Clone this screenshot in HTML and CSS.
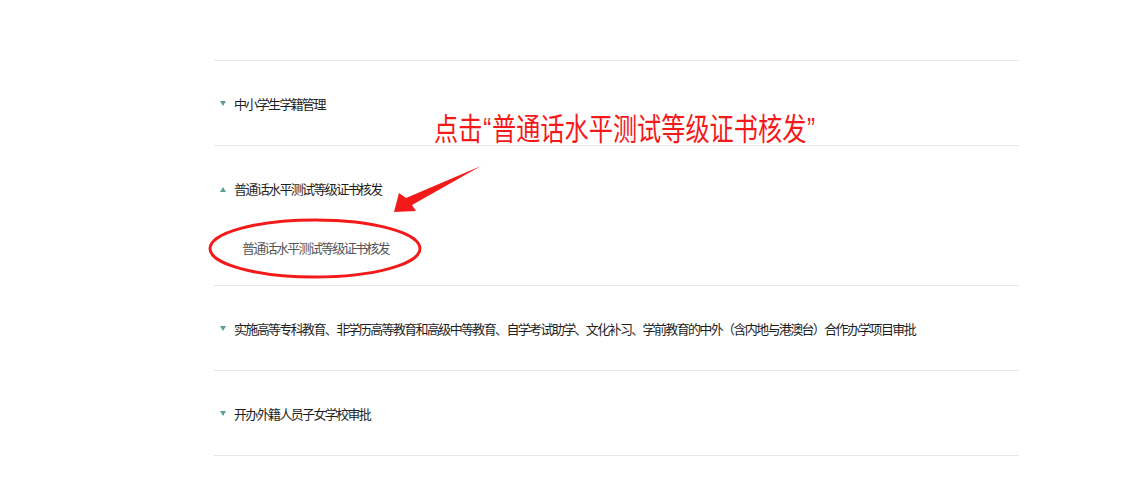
FILE: index.html
```html
<!DOCTYPE html>
<html lang="zh-CN">
<head>
<meta charset="utf-8">
<title>事项列表</title>
<link rel="stylesheet" href="styles.css">
</head>
<body>
<div class="page">
  <ul class="list">
    <li class="item">
      <div class="head"><span class="tri down"></span><span class="label">中小学生学籍管理</span></div>
    </li>
    <li class="item open">
      <div class="head"><span class="tri up"></span><span class="label">普通话水平测试等级证书核发</span></div>
      <ul class="sub">
        <li class="sub-item">普通话水平测试等级证书核发</li>
      </ul>
    </li>
    <li class="item">
      <div class="head"><span class="tri down"></span><span class="label">实施高等专科教育、非学历高等教育和高级中等教育、自学考试助学、文化补习、学前教育的中外（含内地与港澳台）合作办学项目审批</span></div>
    </li>
    <li class="item">
      <div class="head"><span class="tri down"></span><span class="label">开办外籍人员子女学校审批</span></div>
    </li>
  </ul>

  <div class="note">点击<span class="q">“</span>普通话水平测试等级证书核发<span class="q">”</span></div>
  <svg class="marks" width="1141" height="497" viewBox="0 0 1141 497">
    <ellipse cx="315" cy="248.5" rx="105" ry="28.5" fill="none" stroke="#f41a1a" stroke-width="3"/>
    <polygon points="394,212 399,193 406,198 481,166 412,205 416,211" fill="#f41a1a"/>
  </svg>
</div>
</body>
</html>
```
FILE: styles.css
```css
* { box-sizing: border-box; }
html, body { margin: 0; padding: 0; background: #fff; }
body {
  font-family: "Noto Sans CJK SC", "Noto Sans", sans-serif;
  color: #222;
}
.page {
  position: relative;
  width: 1141px;
  height: 497px;
  padding-top: 60px;
}
.list {
  list-style: none;
  margin: 0 0 0 214px;
  padding: 0;
  width: 805px;
  border-top: 1px solid #e6e6e6;
}
.item {
  border-bottom: 1px solid #e6e6e6;
}
.head {
  height: 84px;
  display: flex;
  align-items: center;
  padding-left: 6px;
  padding-top: 1px;
}
.item.open .head { height: 86px; padding-top: 0; }
.tri {
  width: 0;
  height: 0;
  border-left: 3.5px solid transparent;
  border-right: 3.5px solid transparent;
  margin-right: 8px;
}
.tri.down { border-top: 5px solid #5b9f9c; }
.tri.up { border-bottom: 5px solid #5b9f9c; }
.label {
  font-size: 13px;
  letter-spacing: -1.65px;
  line-height: 20px;
  color: #1e1e1e;
}
.sub {
  list-style: none;
  margin: 0;
  padding: 4px 0 25px 28px;
}
.sub-item {
  font-size: 13px;
  letter-spacing: -1.7px;
  line-height: 24px;
  color: #555;
}
.note {
  position: absolute;
  left: 434px;
  top: 107px;
  font-size: 31px;
  line-height: 40px;
  color: #f41a1a;
  white-space: nowrap;
  transform: scaleX(0.78);
  transform-origin: left center;
}
.note .q {
  font-family: "Liberation Sans", sans-serif;
  margin: 0 1px;
}
.marks {
  position: absolute;
  left: 0;
  top: 0;
  pointer-events: none;
}
```
